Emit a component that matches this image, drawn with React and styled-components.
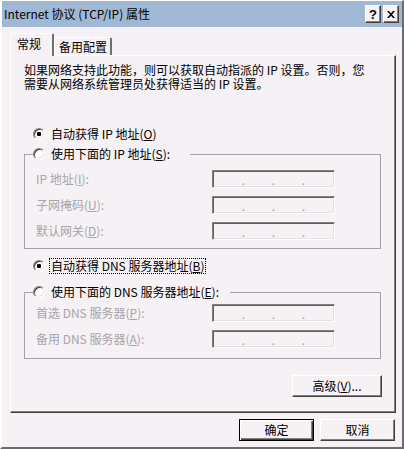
import React from 'react';
import styled, { createGlobalStyle } from 'styled-components';

const FACE = '#f5f1f4';
const DISABLED = '#a8a4a8';

const GlobalStyle = createGlobalStyle`
  html, body {
    margin: 0;
    padding: 0;
    background: ${FACE};
  }
  body {
    font-family: "Noto Sans CJK SC", "DejaVu Sans", sans-serif;
    font-size: 12px;
    color: #000;
  }
`;

const Window = styled.div`
  box-sizing: border-box;
  width: 404px;
  height: 449px;
  background: ${FACE};
  border-top: 1px solid #fff;
  border-left: 2px solid #fff;
  border-right: 2px solid #6e6a6e;
  border-bottom: 2px solid #6e6a6e;
  display: flex;
  flex-direction: column;
`;

const TitleBar = styled.div`
  height: 26px;
  background: #a0b8d4;
  display: flex;
  align-items: center;
  padding: 0 3px 0 2px;
`;

const Title = styled.span`
  flex: 1;
  line-height: 14px;
  white-space: nowrap;
`;

const CaptionButton = styled.div`
  box-sizing: border-box;
  width: 16px;
  height: 18px;
  margin-left: ${(p) => p.$gap || 0}px;
  background: ${FACE};
  border: 1px solid;
  border-color: #fff #404040 #404040 #fff;
  box-shadow: inset -1px -1px 0 #808080;
  display: flex;
  align-items: center;
  justify-content: center;
  font-family: "Liberation Sans", Arial, sans-serif;
  font-weight: bold;
  font-size: 13px;
  line-height: 1;
`;

const Body = styled.div`
  padding: 6px 6px 0 8px;
  display: flex;
  flex-direction: column;
`;

const TabStrip = styled.div`
  display: flex;
  align-items: flex-end;
  height: 22px;
  position: relative;
  z-index: 1;
`;

const Tab = styled.div`
  box-sizing: border-box;
  height: ${(p) => (p.$active ? 23 : 18)}px;
  margin-bottom: ${(p) => (p.$active ? -1 : 0)}px;
  padding: ${(p) => (p.$active ? 3 : 2)}px ${(p) => p.$pr}px 0 ${(p) => p.$pl}px;
  background: ${FACE};
  border-top: 1px solid #fff;
  border-left: 1px solid #fff;
  border-right: 2px solid #707070;
  border-radius: 2px 2px 0 0;
  line-height: 14px;
  white-space: nowrap;
`;

const Panel = styled.div`
  box-sizing: border-box;
  width: 386px;
  display: flex;
  flex-direction: column;
  padding-bottom: 15px;
  border-top: 1px solid #fff;
  border-left: 1px solid #fff;
  border-right: 1px solid #404040;
  border-bottom: 1px solid #404040;
  box-shadow: inset -1px -1px 0 #808080;
`;

const Description = styled.p`
  width: 350px;
  margin: 7px 0 0 13px;
  line-height: 14px;
`;

const RadioRow = styled.div`
  display: flex;
  align-items: center;
  height: 14px;
  margin: ${(p) => p.$mt || 0}px 0 0 ${(p) => p.$ml || 0}px;
  white-space: nowrap;
  line-height: 14px;
`;

const RadioCircle = styled.span`
  box-sizing: border-box;
  width: 12px;
  height: 12px;
  margin-right: 6px;
  border-radius: 50%;
  background: #fff;
  border: 1px solid;
  border-color: #808080 #fff #fff #808080;
  box-shadow: inset 1px 1px 0 #404040, inset -1px -1px 0 #e4e0e4;
  display: flex;
  align-items: center;
  justify-content: center;
  flex-shrink: 0;

  &::after {
    content: '';
    display: ${(p) => (p.$checked ? 'block' : 'none')};
    width: 4px;
    height: 4px;
    border-radius: 1px;
    background: #000;
  }
`;

const FocusText = styled.span`
  outline: 1px dotted #000;
  outline-offset: 0;
  padding: 0 1px;
  margin-left: -1px;
`;

const GroupBox = styled.fieldset`
  box-sizing: border-box;
  width: 357px;
  min-width: 0;
  margin: ${(p) => p.$mt}px 0 0 13px;
  padding: ${(p) => p.$pt}px 0 ${(p) => p.$pb}px 0;
  border: 1px solid #a5a1a5;
  display: flex;
  flex-direction: column;
  gap: 8px;
`;

const Legend = styled.legend`
  box-sizing: border-box;
  width: ${(p) => p.$w}px;
  margin-left: 8px;
  padding: 0;
  background: ${FACE};
`;

const FieldRow = styled.div`
  display: flex;
  align-items: center;
  height: 18px;
  padding-left: 11px;
`;

const FieldLabel = styled.span`
  width: 176px;
  color: ${DISABLED};
  line-height: 14px;
  white-space: nowrap;
`;

const IpBox = styled.div`
  box-sizing: border-box;
  width: 123px;
  height: 18px;
  display: flex;
  align-items: center;
  border: 1px solid;
  border-color: #808080 #fff #fff #808080;
  box-shadow: inset 1px 1px 0 #606060, inset -1px -1px 0 #e4e0e4;
  padding-left: 1px;
`;

const IpSegment = styled.span`
  width: 29px;
`;

const IpDot = styled.span`
  width: 1px;
  display: flex;
  justify-content: center;
  color: ${DISABLED};
  font-size: 12px;
  line-height: 14px;
  margin-top: 2px;
`;

const Button = styled.button`
  box-sizing: border-box;
  width: ${(p) => p.$w}px;
  height: 22px;
  padding: 0;
  font: inherit;
  color: #000;
  line-height: 14px;
  background: ${FACE};
  border: 1px solid;
  border-color: ${(p) => (p.$default ? '#000' : '#fff #404040 #404040 #fff')};
  box-shadow: ${(p) =>
    p.$default
      ? 'inset 1px 1px 0 #fff, inset -1px -1px 0 #404040, inset -2px -2px 0 #808080'
      : 'inset -1px -1px 0 #808080'};
`;

const PanelActions = styled.div`
  display: flex;
  justify-content: flex-end;
  margin: 16px 13px 0 0;
`;

const Footer = styled.div`
  display: flex;
  justify-content: flex-end;
  gap: 6px;
  margin-top: 6px;
  padding-right: 1px;
`;

const Radio = ({ checked, children }) => (
  <>
    <RadioCircle $checked={checked} />
    {children}
  </>
);

const IpField = () => (
  <IpBox>
    <IpSegment />
    <IpDot>.</IpDot>
    <IpSegment />
    <IpDot>.</IpDot>
    <IpSegment />
    <IpDot>.</IpDot>
    <IpSegment />
  </IpBox>
);

const Field = ({ label, keyChar }) => (
  <FieldRow>
    <FieldLabel>
      {label}(<u>{keyChar}</u>):
    </FieldLabel>
    <IpField />
  </FieldRow>
);

const CloseGlyph = () => (
  <svg width="8" height="7" viewBox="0 0 8 7">
    <path d="M0 0h2l2 2.2L6 0h2L5 3.5 8 7H6L4 4.8 2 7H0l3-3.5z" fill="#000" />
  </svg>
);

export default function App() {
  return (
    <>
      <GlobalStyle />
      <Window>
        <TitleBar>
          <Title>Internet 协议 (TCP/IP) 属性</Title>
          <CaptionButton>?</CaptionButton>
          <CaptionButton $gap={2}>
            <CloseGlyph />
          </CaptionButton>
        </TitleBar>

        <Body>
          <TabStrip>
            <Tab $active $pl={6} $pr={11}>常规</Tab>
            <Tab $pl={4} $pr={3}>备用配置</Tab>
          </TabStrip>

          <Panel>
            <Description>
              如果网络支持此功能，则可以获取自动指派的 IP 设置。否则，您需要从网络系统管理员处获得适当的 IP 设置。
            </Description>

            <RadioRow $mt={36} $ml={22}>
              <Radio checked>
                自动获得 IP 地址(<u>O</u>)
              </Radio>
            </RadioRow>

            <GroupBox $mt={6} $pt={9} $pb={8}>
              <Legend $w={157}>
                <RadioRow>
                  <Radio>
                    使用下面的 IP 地址(<u>S</u>):
                  </Radio>
                </RadioRow>
              </Legend>
              <Field label="IP 地址" keyChar="I" />
              <Field label="子网掩码" keyChar="U" />
              <Field label="默认网关" keyChar="D" />
            </GroupBox>

            <RadioRow $mt={10} $ml={22}>
              <Radio checked>
                <FocusText>
                  自动获得 DNS 服务器地址(<u>B</u>)
                </FocusText>
              </Radio>
            </RadioRow>

            <GroupBox $mt={12} $pt={5} $pb={10}>
              <Legend $w={197}>
                <RadioRow>
                  <Radio>
                    使用下面的 DNS 服务器地址(<u>E</u>):
                  </Radio>
                </RadioRow>
              </Legend>
              <Field label="首选 DNS 服务器" keyChar="P" />
              <Field label="备用 DNS 服务器" keyChar="A" />
            </GroupBox>

            <PanelActions>
              <Button $w={90}>
                高级(<u>V</u>)...
              </Button>
            </PanelActions>
          </Panel>

          <Footer>
            <Button $w={75} $default>确定</Button>
            <Button $w={75}>取消</Button>
          </Footer>
        </Body>
      </Window>
    </>
  );
}
